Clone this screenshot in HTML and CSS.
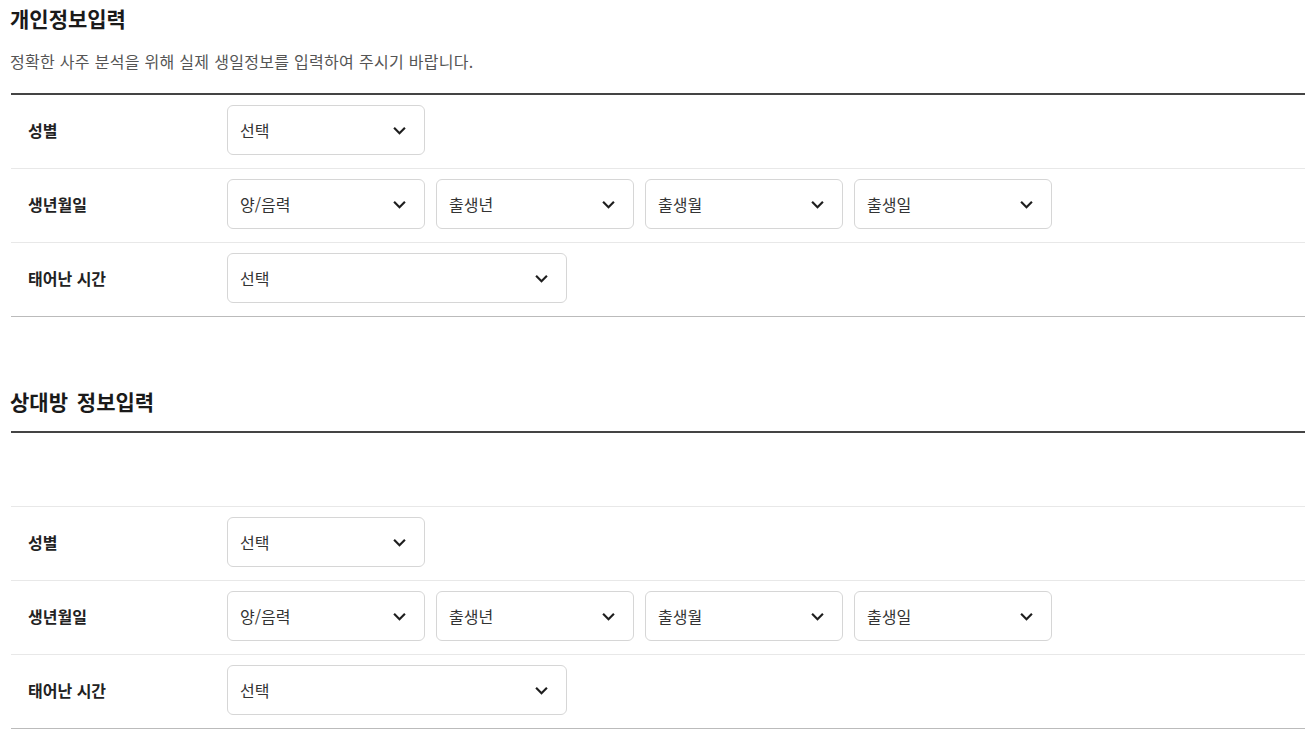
FILE: index.html
```html
<!DOCTYPE html>
<html lang="ko">
<head>
  <meta charset="UTF-8">
  <meta name="viewport" content="width=device-width, initial-scale=1.0">
  <title>정보입력</title>
  <link rel="stylesheet" href="styles.css">
</head>
<body>
  <div class="page">
    <section class="info-section">
      <h2 class="section-title">개인정보입력</h2>
      <p class="section-desc">정확한 사주 분석을 위해 실제 생일정보를 입력하여 주시기 바랍니다.</p>
      <div class="form-table">
        <div class="form-row">
          <div class="row-label">성별</div>
          <div class="row-fields">
            <div class="select"><span>선택</span><svg viewBox="0 0 12 8"><path d="M1 1.5l5 5 5-5"/></svg></div>
          </div>
        </div>
        <div class="form-row">
          <div class="row-label">생년월일</div>
          <div class="row-fields">
            <div class="select"><span>양/음력</span><svg viewBox="0 0 12 8"><path d="M1 1.5l5 5 5-5"/></svg></div>
            <div class="select"><span>출생년</span><svg viewBox="0 0 12 8"><path d="M1 1.5l5 5 5-5"/></svg></div>
            <div class="select"><span>출생월</span><svg viewBox="0 0 12 8"><path d="M1 1.5l5 5 5-5"/></svg></div>
            <div class="select"><span>출생일</span><svg viewBox="0 0 12 8"><path d="M1 1.5l5 5 5-5"/></svg></div>
          </div>
        </div>
        <div class="form-row">
          <div class="row-label">태어난 시간</div>
          <div class="row-fields">
            <div class="select wide"><span>선택</span><svg viewBox="0 0 12 8"><path d="M1 1.5l5 5 5-5"/></svg></div>
          </div>
        </div>
      </div>
    </section>

    <section class="info-section partner">
      <h2 class="section-title">상대방 정보입력</h2>
      <div class="form-table">
        <div class="form-row empty"></div>
        <div class="form-row">
          <div class="row-label">성별</div>
          <div class="row-fields">
            <div class="select"><span>선택</span><svg viewBox="0 0 12 8"><path d="M1 1.5l5 5 5-5"/></svg></div>
          </div>
        </div>
        <div class="form-row">
          <div class="row-label">생년월일</div>
          <div class="row-fields">
            <div class="select"><span>양/음력</span><svg viewBox="0 0 12 8"><path d="M1 1.5l5 5 5-5"/></svg></div>
            <div class="select"><span>출생년</span><svg viewBox="0 0 12 8"><path d="M1 1.5l5 5 5-5"/></svg></div>
            <div class="select"><span>출생월</span><svg viewBox="0 0 12 8"><path d="M1 1.5l5 5 5-5"/></svg></div>
            <div class="select"><span>출생일</span><svg viewBox="0 0 12 8"><path d="M1 1.5l5 5 5-5"/></svg></div>
          </div>
        </div>
        <div class="form-row">
          <div class="row-label">태어난 시간</div>
          <div class="row-fields">
            <div class="select wide"><span>선택</span><svg viewBox="0 0 12 8"><path d="M1 1.5l5 5 5-5"/></svg></div>
          </div>
        </div>
      </div>
    </section>
  </div>
</body>
</html>
```

FILE: styles.css
```css
body {
  margin: 0;
  background: #fff;
  color: #222;
  font-family: "Noto Sans CJK KR", "Noto Sans", sans-serif;
}
.page {
  padding: 0 6px 0 11px;
}
.section-title {
  margin: 4px 0 0 -1px;
  font-size: 21px;
  line-height: 28px;
  font-weight: bold;
  word-spacing: 3px;
  color: #1a1a1a;
}
.section-desc {
  margin: 19px 0 0 -1px;
  font-size: 16px;
  line-height: 20px;
  letter-spacing: 0.3px;
  color: #555;
}
.form-table {
  margin-top: 22px;
  border-top: 2px solid #444;
  border-bottom: 1px solid #bbb;
}
.form-row {
  display: flex;
  align-items: center;
  padding: 10px 0 13px;
  border-bottom: 1px solid #e8e8e8;
}
.form-row:last-child {
  border-bottom: none;
}
.form-row.empty {
  height: 50px;
}
.row-label {
  width: 199px;
  padding-left: 17px;
  font-size: 16px;
  font-weight: bold;
  color: #222;
}
.row-fields {
  display: flex;
  gap: 11px;
}
.select {
  box-sizing: border-box;
  width: 198px;
  height: 50px;
  padding: 0 18px 0 12px;
  display: flex;
  align-items: center;
  justify-content: space-between;
  border: 1px solid #d6d6d6;
  border-radius: 6px;
  background: #fff;
  font-size: 16px;
  color: #333;
}
.select.wide {
  width: 340px;
}
.select svg {
  width: 13px;
  height: 9px;
  fill: none;
  stroke: #1e1e1e;
  stroke-width: 2;
}
.partner .section-title {
  margin-top: 70px;
}
.partner .form-table {
  margin-top: 16px;
}
```
